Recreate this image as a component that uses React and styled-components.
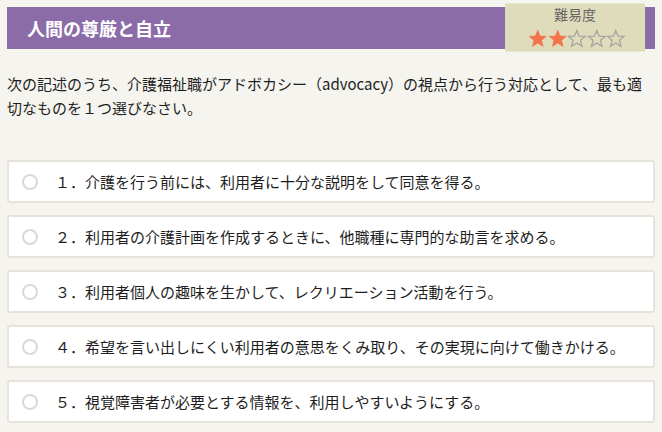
import React from 'react'
import styled, { createGlobalStyle } from 'styled-components'

const GlobalStyle = createGlobalStyle`
  html, body {
    margin: 0;
    padding: 0;
    background: #f5f4ef;
  }
  body {
    font-family: "Noto Sans CJK JP", "Noto Sans", sans-serif;
    color: #222;
  }
`

const Page = styled.div`
  width: 662px;
  height: 432px;
  box-sizing: border-box;
  padding: 7px;
  overflow: hidden;
`

const TitleBar = styled.div`
  height: 42px;
  background: #8b6ca9;
  display: flex;
  align-items: center;
  padding-left: 20px;
`

const Title = styled.h1`
  margin: 0;
  font-size: 18px;
  font-weight: 700;
  color: #fff;
`

const Badge = styled.div`
  margin: -4px 10px -3px auto;
  width: 140px;
  height: 49px;
  box-sizing: border-box;
  background: #dfdcbb;
  border-top: 1px solid #e8e6cf;
  border-bottom: 1px solid #e8e6cf;
  display: flex;
  flex-direction: column;
  align-items: center;
`

const BadgeLabel = styled.div`
  font-size: 14px;
  color: #666;
  line-height: 20px;
`

const Stars = styled.div`
  display: flex;
  margin-top: 5px;
  margin-left: 4px;
`

const StarSvg = styled.svg`
  width: 19.5px;
  height: 19.5px;
  display: block;
`

const Question = styled.p`
  margin: 23px 0 0;
  font-size: 15px;
  line-height: 24px;
  color: #1e1e1e;
`

const Options = styled.div`
  margin-top: 40px;
  display: flex;
  flex-direction: column;
  gap: 12px;
`

const Option = styled.label`
  height: 43px;
  box-sizing: border-box;
  background: #fff;
  border: 2px solid #e6e3dc;
  border-radius: 3px;
  display: flex;
  align-items: center;
  padding-left: 13px;
  cursor: pointer;
`

const Radio = styled.span`
  width: 16px;
  height: 16px;
  box-sizing: border-box;
  border: 2px solid #dcd9d3;
  border-radius: 50%;
  flex: none;
`

const OptionText = styled.span`
  margin-left: 17px;
  font-size: 15px;
  color: #1e1e1e;
`

const Star = ({ on }) => (
  <StarSvg viewBox="0 0 20 20">
    <polygon
      points="10,1.5 12.4,7.3 18.6,7.6 13.8,11.6 15.4,17.8 10,14.4 4.6,17.8 6.2,11.6 1.4,7.6 7.6,7.3"
      fill={on ? '#f4734a' : 'none'}
      stroke={on ? '#f4734a' : '#a3a3a3'}
      strokeWidth={on ? 0.8 : 1.3}
    />
  </StarSvg>
)

const choices = [
  '１．介護を行う前には、利用者に十分な説明をして同意を得る。',
  '２．利用者の介護計画を作成するときに、他職種に専門的な助言を求める。',
  '３．利用者個人の趣味を生かして、レクリエーション活動を行う。',
  '４．希望を言い出しにくい利用者の意思をくみ取り、その実現に向けて働きかける。',
  '５．視覚障害者が必要とする情報を、利用しやすいようにする。',
]

export default function App() {
  const level = 2
  return (
    <Page>
      <GlobalStyle />
      <TitleBar>
        <Title>人間の尊厳と自立</Title>
        <Badge>
          <BadgeLabel>難易度</BadgeLabel>
          <Stars>
            {[0, 1, 2, 3, 4].map(i => (
              <Star key={i} on={i < level} />
            ))}
          </Stars>
        </Badge>
      </TitleBar>
      <Question>
        次の記述のうち、介護福祉職がアドボカシー（advocacy）の視点から行う対応として、最も適切なものを１つ選びなさい。
      </Question>
      <Options>
        {choices.map(c => (
          <Option key={c}>
            <Radio />
            <OptionText>{c}</OptionText>
          </Option>
        ))}
      </Options>
    </Page>
  )
}
